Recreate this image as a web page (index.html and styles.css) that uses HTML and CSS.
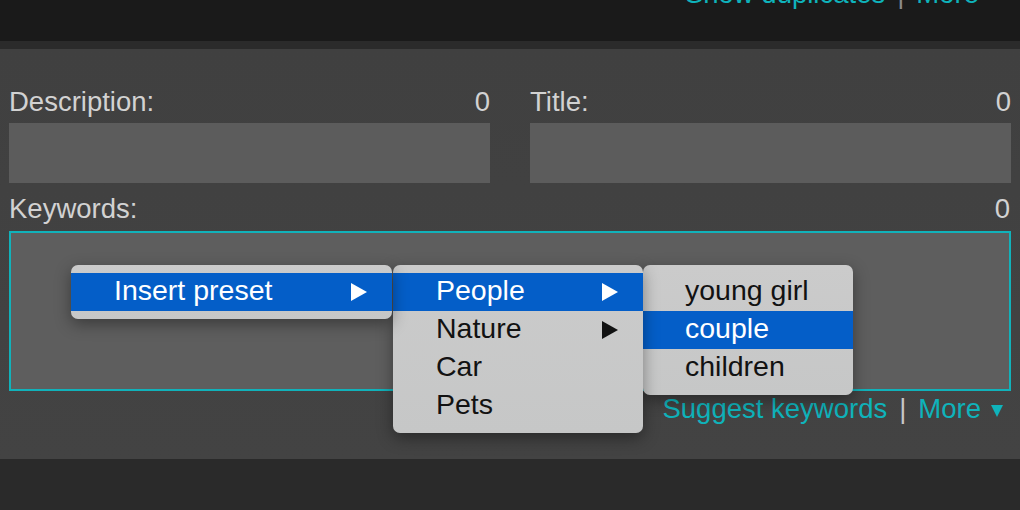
FILE: index.html
```html
<!DOCTYPE html>
<html>
<head>
<meta charset="utf-8">
<title>Metadata</title>
<link rel="stylesheet" href="styles.css">
</head>
<body>
<div class="app">
  <header class="topbar">
    <div class="links links-top">
      <span class="link">Show duplicates</span><span class="sep sep-dim">|</span><span class="link">More</span>
    </div>
  </header>
  <div class="band"></div>
  <main class="panel">
    <div class="fields">
      <div class="field">
        <div class="label-row"><span>Description:</span><span>0</span></div>
        <div class="input"></div>
      </div>
      <div class="field">
        <div class="label-row"><span>Title:</span><span>0</span></div>
        <div class="input"></div>
      </div>
    </div>
    <div class="label-row kw-label"><span>Keywords:</span><span>0</span></div>
    <div class="kw-box">
      <div class="menus">
        <div class="menu menu-1">
          <div class="item active"><span>Insert preset</span><span class="arrow"></span></div>
        </div>
        <div class="menu menu-2">
          <div class="item active"><span>People</span><span class="arrow"></span></div>
          <div class="item"><span>Nature</span><span class="arrow"></span></div>
          <div class="item"><span>Car</span></div>
          <div class="item"><span>Pets</span></div>
        </div>
        <div class="menu menu-3">
          <div class="item"><span>young girl</span></div>
          <div class="item active"><span>couple</span></div>
          <div class="item"><span>children</span></div>
        </div>
      </div>
    </div>
    <div class="links links-bottom">
      <span class="link">Suggest keywords</span><span class="sep">|</span><span class="link">More</span><span class="caret"></span>
    </div>
  </main>
  <footer class="bottombar"></footer>
</div>
</body>
</html>
```
FILE: styles.css
```css
html, body {
  margin: 0;
  padding: 0;
  background: #2a2a2a;
}
body {
  width: 1020px;
  height: 510px;
  overflow: hidden;
  font-family: "Liberation Sans", Arial, Helvetica, sans-serif;
}
.app {
  display: flex;
  flex-direction: column;
  width: 1020px;
  height: 510px;
}
.topbar {
  height: 41px;
  background: #1a1a1a;
  overflow: hidden;
}
.band {
  height: 8px;
  background: #2b2b2b;
}
.panel {
  height: 410px;
  box-sizing: border-box;
  background: linear-gradient(#404040, #434343);
  padding: 36.5px 9px 0 9px;
}
.bottombar {
  flex: 1;
  background: #2a2a2a;
}

/* links */
.links {
  display: flex;
  justify-content: flex-end;
  align-items: flex-start;
  font-size: 27.5px;
  line-height: 32px;
  height: 32px;
  padding-right: 17px;
}
.links-top {
  margin-top: -22.5px;
  padding-right: 41px;
}
.links-bottom {
  margin-top: 1.5px;
  padding-right: 8px;
}
.link {
  color: #0fb3bb;
}
.sep {
  color: #c8c8c8;
  margin: 0 12px;
}
.sep-dim {
  color: #8a8a8a;
}
.caret {
  width: 0;
  height: 0;
  border-top: 12px solid #0fb3bb;
  border-left: 6.5px solid transparent;
  border-right: 6.5px solid transparent;
  margin-left: 10px;
  margin-top: 12.5px;
}

/* fields */
.fields {
  display: grid;
  grid-template-columns: 481px 481px;
  column-gap: 40px;
}
.label-row {
  display: flex;
  justify-content: space-between;
  font-size: 27.5px;
  line-height: 32px;
  height: 32px;
  color: #d2d2d2;
}
.input {
  margin-top: 5.5px;
  height: 60px;
  background: #5c5c5c;
}
.kw-label {
  margin-top: 9.5px;
  padding-right: 1px;
}
.kw-box {
  position: relative;
  margin-top: 6.5px;
  height: 160px;
  box-sizing: border-box;
  border: 2px solid #11b2ba;
  background: #5e5e5e;
}

/* menus */
.menus {
  position: absolute;
  top: 32px;
  left: 60px;
  display: flex;
  align-items: flex-start;
}
.menu {
  background: linear-gradient(#cbcbcb, #c6c7c7);
  border-radius: 7px;
  padding: 8px 0;
  box-shadow: 0 5px 16px rgba(0, 0, 0, 0.38);
  font-size: 28.5px;
}
.menu-1 { width: 321px; position: relative; z-index: 3; }
.menu-2 { width: 250px; margin-left: 1px; position: relative; z-index: 2; }
.menu-3 { width: 210px; position: relative; z-index: 1; }
.item {
  display: flex;
  justify-content: space-between;
  align-items: center;
  height: 38px;
  box-sizing: border-box;
  line-height: 34px;
  padding: 0 25px 4px 43px;
  color: #121212;
}
.menu-3 .item {
  padding-left: 42px;
}
.item.active {
  background: #045ec8;
  color: #ffffff;
}
.arrow {
  width: 0;
  height: 0;
  border-left: 16px solid #121212;
  border-top: 9px solid transparent;
  border-bottom: 9px solid transparent;
  margin-top: 4px;
}
.item.active .arrow {
  border-left-color: #ffffff;
}
```
